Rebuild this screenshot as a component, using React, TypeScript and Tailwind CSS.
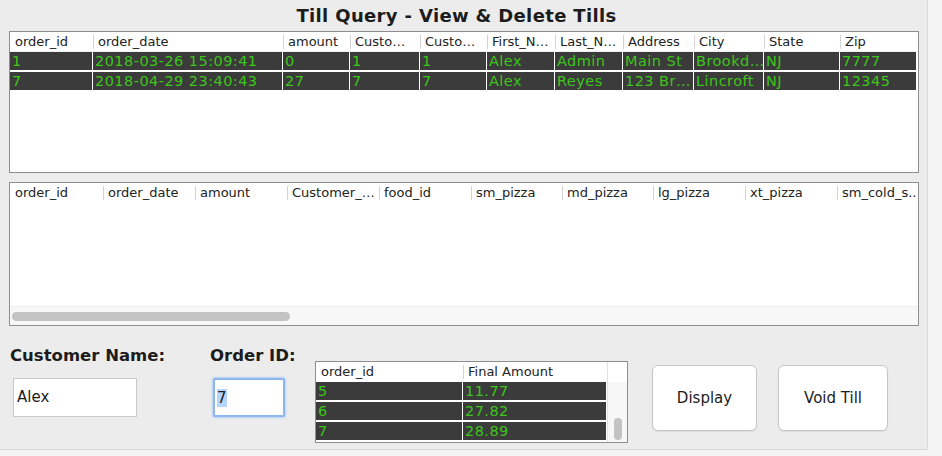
import React from 'react';

const topCols = [
  { name: 'order_id', w: 83 },
  { name: 'order_date', w: 190 },
  { name: 'amount', w: 67 },
  { name: 'Custo…', w: 70 },
  { name: 'Custo…', w: 67 },
  { name: 'First_N…', w: 68 },
  { name: 'Last_N…', w: 68 },
  { name: 'Address', w: 71 },
  { name: 'City', w: 70 },
  { name: 'State', w: 76 },
  { name: 'Zip', w: 77 },
];

const topRows = [
  ['1', '2018-03-26 15:09:41', '0', '1', '1', 'Alex', 'Admin', 'Main St', 'Brookd…', 'NJ', '7777'],
  ['7', '2018-04-29 23:40:43', '27', '7', '7', 'Alex', 'Reyes', '123 Br…', 'Lincroft', 'NJ', '12345'],
];

const foodCols = [
  { name: 'order_id', w: 93 },
  { name: 'order_date', w: 92 },
  { name: 'amount', w: 92 },
  { name: 'Customer_…', w: 92 },
  { name: 'food_id', w: 92 },
  { name: 'sm_pizza', w: 91 },
  { name: 'md_pizza', w: 91 },
  { name: 'lg_pizza', w: 92 },
  { name: 'xt_pizza', w: 92 },
  { name: 'sm_cold_s..', w: 81 },
];

const tillRows = [
  ['5', '11.77'],
  ['6', '27.82'],
  ['7', '28.89'],
];

function HeaderCell({ name, w, first }: { name: string; w: number; first?: boolean }) {
  return (
    <div className="flex items-center h-full shrink-0" style={{ width: w }}>
      <div className={first ? 'w-px h-[14px]' : 'w-px h-[14px] bg-[#d4d4d4]'} />
      <span className="pl-[4px] text-[13px] text-[#222] whitespace-nowrap overflow-hidden">{name}</span>
    </div>
  );
}

function DataRow({ cells, widths }: { cells: string[]; widths: number[] }) {
  return (
    <div className="flex h-[20px] border-b-2 border-white">
      {cells.map((c, i) => (
        <div
          key={i}
          className="h-[18px] bg-[#3b3b3b] border-r border-white shrink-0 pl-[2px] text-[14.5px] leading-[18px] tracking-[0.45px] text-[#3cc51a] whitespace-nowrap overflow-hidden"
          style={{ width: widths[i] }}
        >
          {c}
        </div>
      ))}
    </div>
  );
}

export default function App() {
  return (
    <div className="w-[942px] h-[456px] bg-[#f4f4f4] flex font-['DejaVu_Sans',sans-serif]">
      <div className="w-[928px] h-[450px] bg-[#ececec] border-r border-b border-[#d9d9d9] flex flex-col">
        <div className="h-[31px] flex items-center justify-center pr-[14px]">
          <h1 className="text-[18px] font-bold tracking-[0.35px] text-[#1c1c1c]">Till Query - View &amp; Delete Tills</h1>
        </div>

        <div className="ml-[9px] w-[910px] h-[142px] border border-[#8e8e8e] bg-white flex flex-col">
          <div className="flex h-[20px] border-b border-[#f0f0f0]">
            {topCols.map((c, i) => (
              <HeaderCell key={i} name={c.name} w={c.w} first={i === 0} />
            ))}
          </div>
          {topRows.map((r, i) => (
            <DataRow key={i} cells={r} widths={topCols.map((c) => c.w)} />
          ))}
        </div>

        <div className="ml-[9px] mt-[9px] w-[910px] h-[144px] border border-[#8e8e8e] bg-white flex flex-col">
          <div className="flex h-[20px]">
            {foodCols.map((c, i) => (
              <HeaderCell key={i} name={c.name} w={c.w} first={i === 0} />
            ))}
          </div>
          <div className="flex-1" />
          <div className="h-[19px] bg-[#f7f7f7] border-t border-[#ececec] flex items-center pl-[2px]">
            <div className="w-[278px] h-[9px] rounded-full bg-[#c3c3c3]" />
          </div>
        </div>

        <div className="flex pl-[10px]">
          <div className="w-[200px] flex flex-col">
            <div className="mt-[20px] h-[20px] leading-[20px] text-[16.5px] font-bold text-[#1c1c1c]">Customer Name:</div>
            <div className="mt-[12px] ml-[3px] w-[124px] h-[39px] bg-white border border-[#c9c9c9] flex items-center pl-[3px] text-[15px] text-[#1c1c1c]">
              Alex
            </div>
          </div>

          <div className="w-[105px] flex flex-col">
            <div className="mt-[20px] h-[20px] leading-[20px] text-[16.5px] font-bold text-[#1c1c1c]">Order ID:</div>
            <div className="mt-[12px] ml-[3px] w-[72px] h-[39px] bg-white border-2 border-[#8db6ee] rounded-[2px] shadow-[0_0_2px_1px_#b9d2f5] flex items-center pl-[2px] text-[15px] text-[#1c1c1c]">
              <span className="bg-[#b4d5fe] leading-[18px]">7</span>
            </div>
          </div>

          <div className="mt-[35px] w-[313px] h-[82px] border border-[#8e8e8e] bg-white flex">
            <div className="w-[291px] flex flex-col">
              <div className="flex h-[20px]">
                <HeaderCell name="order_id" w={147} first />
                <HeaderCell name="Final Amount" w={144} />
              </div>
              {tillRows.map((r, i) => (
                <DataRow key={i} cells={r} widths={[147, 144]} />
              ))}
            </div>
            <div className="flex-1 flex flex-col border-l border-[#e2e2e2]">
              <div className="h-[20px] bg-white" />
              <div className="flex-1 bg-[#f7f7f7] flex flex-col items-center justify-end pb-[2px]">
                <div className="w-[8px] h-[22px] rounded-full bg-[#c3c3c3]" />
              </div>
            </div>
          </div>

          <div className="mt-[39px] ml-[24px] flex gap-[21px]">
            <button className="w-[105px] h-[66px] bg-white border border-[#c6c6c6] rounded-[6px] shadow-[0_1px_1px_rgba(0,0,0,0.08)] text-[15px] text-[#1c1c1c]">
              Display
            </button>
            <button className="w-[110px] h-[66px] bg-white border border-[#c6c6c6] rounded-[6px] shadow-[0_1px_1px_rgba(0,0,0,0.08)] text-[15px] text-[#1c1c1c]">
              Void Till
            </button>
          </div>
        </div>
      </div>
    </div>
  );
}
